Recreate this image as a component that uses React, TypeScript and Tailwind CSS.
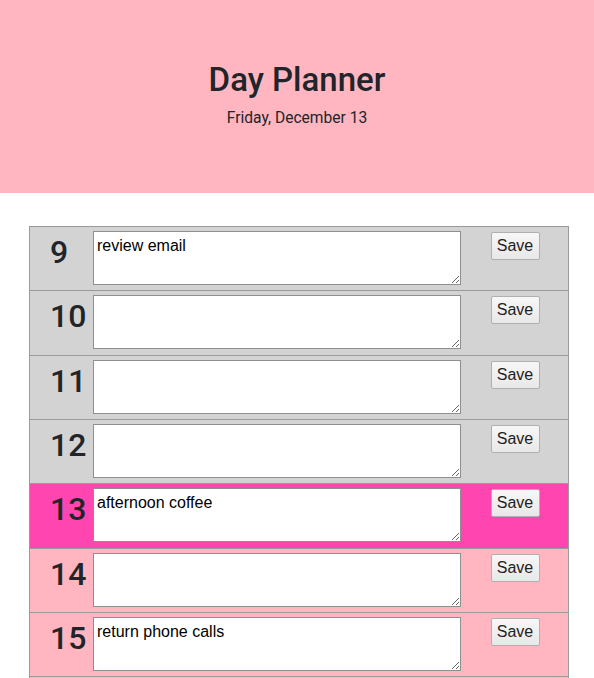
import React from "react";

const rows: { hour: number; text: string; kind: "past" | "present" | "future" }[] = [
  { hour: 9, text: "review email", kind: "past" },
  { hour: 10, text: "", kind: "past" },
  { hour: 11, text: "", kind: "past" },
  { hour: 12, text: "", kind: "past" },
  { hour: 13, text: "afternoon coffee", kind: "present" },
  { hour: 14, text: "", kind: "future" },
  { hour: 15, text: "return phone calls", kind: "future" },
  { hour: 16, text: "", kind: "future" },
];

export default function App() {
  return (
    <div className="min-h-[678px] bg-white text-[#212529]" style={{ fontFamily: "Roboto, Inter, 'Noto Sans', sans-serif" }}>
      <header className="h-[193px] bg-[#ffb6c1] pt-[61px] text-center">
        <h1 className="text-[33px] leading-[38px] font-medium">Day Planner</h1>
        <p className="mt-[7px] text-[15.6px] leading-[24px]">Friday, December 13</p>
      </header>
      <div className="mt-[33px] ml-[29px] w-[540px] border-t border-l border-r border-[#9a9a9a]">
        {rows.map((r) => (
          <div
            key={r.hour}
            className={
              "flex h-[64.33px] border-b border-[#9a9a9a] " +
              (r.kind === "past" ? "bg-[#d3d3d3]" : r.kind === "present" ? "bg-[#ff45b0]" : "bg-[#ffb6c1]")
            }
          >
            <div className="w-[63px] pl-[20px] pt-[6px] text-[32px] leading-[38px] font-medium">{r.hour}</div>
            <div className="pt-[4px]">
              <textarea
                defaultValue={r.text}
                className="block h-[54px] w-[368px] resize border border-[#8f8f8f] bg-white px-[3px] py-[2px] text-[16px] leading-[24px] text-black outline-none"
                style={{ fontFamily: "'Liberation Sans', Arial, sans-serif" }}
              />
            </div>
            <div className="flex flex-1 justify-center pt-[5px] pl-[1px]">
              <button
                className="h-[28px] w-[49px] rounded-[2px] border border-[#b0b0b0] bg-gradient-to-b from-[#f7f7f7] to-[#e8e8e8] text-[16px] leading-none text-[#222]"
                style={{ fontFamily: "'Liberation Sans', Arial, sans-serif" }}
              >
                Save
              </button>
            </div>
          </div>
        ))}
      </div>
    </div>
  );
}
